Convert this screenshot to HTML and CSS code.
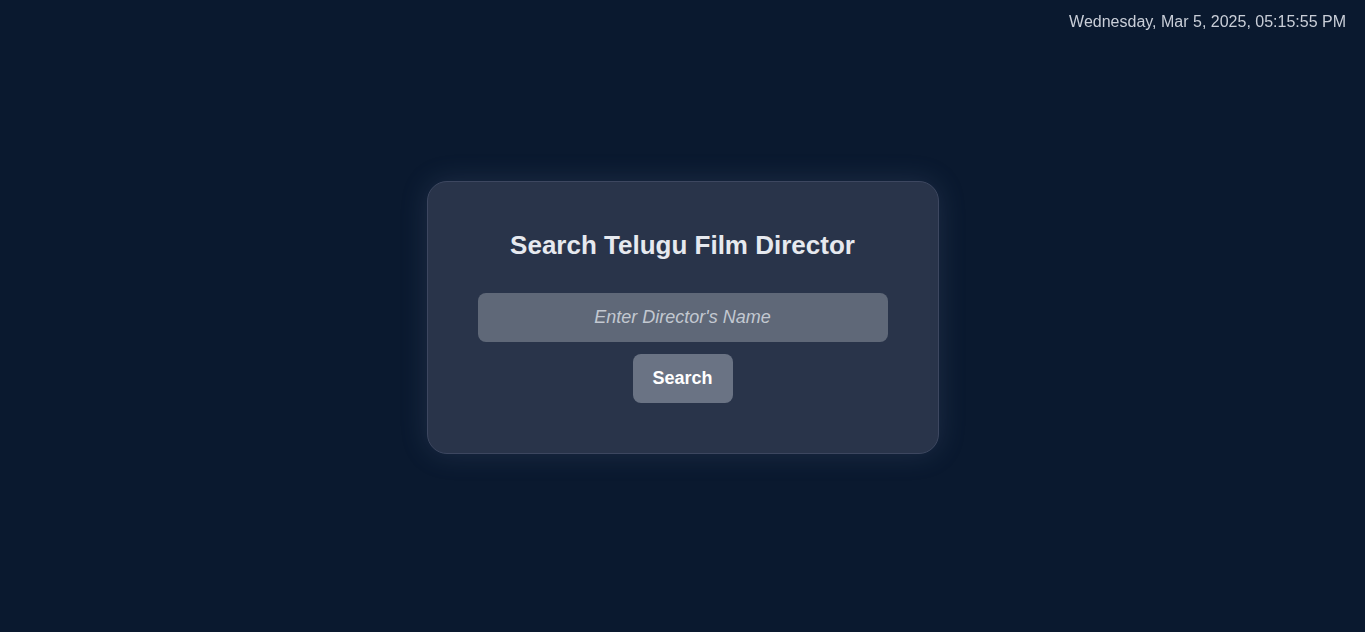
FILE: index.html
```html
<!DOCTYPE html>
<html lang="en">
<head>
<meta charset="utf-8">
<title>Search Telugu Film Director</title>
<link rel="stylesheet" href="styles.css">
</head>
<body>
<div class="clock">Wednesday, Mar 5, 2025, 05:15:55 PM</div>
<main class="card">
  <h2 class="title">Search Telugu Film Director</h2>
  <form class="search">
    <input class="field" type="text" placeholder="Enter Director's Name">
    <button class="btn" type="button">Search</button>
  </form>
</main>
</body>
</html>
```
FILE: styles.css
```css
* { box-sizing: border-box; }
html, body { margin: 0; height: 100%; }
body {
  background: #0a192f;
  font-family: "Liberation Sans", Arial, sans-serif;
  color: #e6e9ef;
  display: grid;
  place-items: center;
  min-height: 100vh;
  padding-top: 3px;
}
.clock {
  position: fixed;
  top: 13px;
  right: 19px;
  font-size: 16px;
  color: #c9ced8;
}
.card {
  width: 512px;
  padding: 50px;
  background: #29344a;
  border: 1px solid #3d4760;
  border-radius: 20px;
  box-shadow: 0 0 28px rgba(120, 140, 180, 0.18);
  text-align: center;
}
.title {
  margin: 0 0 35px;
  font-size: 26px;
  line-height: 26px;
  font-weight: bold;
  color: #e6e9ef;
}
.search {
  display: flex;
  flex-direction: column;
  align-items: center;
  gap: 12px;
}
.field {
  width: 410px;
  height: 49px;
  border: none;
  border-radius: 8px;
  background: #5f6878;
  color: #fff;
  font-family: "Liberation Sans", Arial, sans-serif;
  font-size: 18px;
  text-align: center;
  outline: none;
}
.field::placeholder {
  color: #c3c8d1;
  font-style: italic;
}
.btn {
  width: 100px;
  height: 49px;
  border: none;
  border-radius: 8px;
  background: #6a7384;
  color: #fff;
  font-family: "Liberation Sans", Arial, sans-serif;
  font-size: 18px;
  font-weight: bold;
  cursor: pointer;
}
```
